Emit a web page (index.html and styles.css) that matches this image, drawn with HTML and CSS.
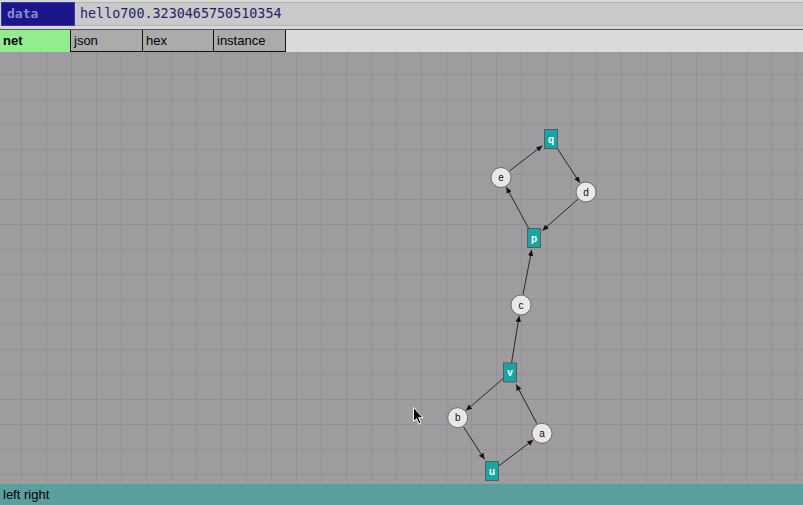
FILE: index.html
```html
<!DOCTYPE html>
<html>
<head>
<meta charset="utf-8">
<link rel="stylesheet" href="styles.css">
</head>
<body>
<div class="app">
  <div class="header">
    <div class="label">data</div>
    <div class="value">hello700.3230465750510354</div>
  </div>
  <div class="tabs">
    <div class="tab active">net</div>
    <div class="tab wide">json</div>
    <div class="tab">hex</div>
    <div class="tab wide">instance</div>
  </div>
  <div class="canvas">
    <svg class="graph" width="803" height="432" viewBox="0 0 803 432">
      <defs>
        <marker id="arr" markerUnits="userSpaceOnUse" markerWidth="7" markerHeight="6" refX="6" refY="3" orient="auto">
          <path d="M0,0.3 L6,3 L0,5.7 z" fill="#111"/>
        </marker>
      </defs>
      <g class="edges">
        <line x1="509.7" y1="118.8" x2="542.3" y2="93.7"/>
        <line x1="557.6" y1="97" x2="579.9" y2="130.8"/>
        <line x1="577.8" y1="147.3" x2="542.5" y2="178.5"/>
        <line x1="528.5" y1="176" x2="506.3" y2="135.2"/>
        <line x1="523.1" y1="242.2" x2="531.7" y2="198"/>
        <line x1="511.6" y1="310.7" x2="519.2" y2="263.9"/>
        <line x1="503" y1="326.7" x2="466" y2="358.5"/>
        <line x1="463.6" y1="375" x2="484.5" y2="407.3"/>
        <line x1="499" y1="413.7" x2="533.2" y2="387.9"/>
        <line x1="536.9" y1="371.6" x2="516.2" y2="332.5"/>
      </g>
      <g class="place">
        <circle cx="501" cy="125.5" r="10"/><text x="501" y="129">e</text>
        <circle cx="586" cy="140" r="10"/><text x="586" y="143.5">d</text>
        <circle cx="521" cy="253" r="10"/><text x="521" y="256.5">c</text>
        <circle cx="457.7" cy="365.7" r="10"/><text x="457.7" y="369.2">b</text>
        <circle cx="542" cy="381.3" r="10"/><text x="542" y="384.8">a</text>
      </g>
      <g class="trans">
        <rect x="544.5" y="77.5" width="13" height="19"/><text x="551" y="90.5">q</text>
        <rect x="527.5" y="176.5" width="13" height="19"/><text x="534" y="189.5">p</text>
        <rect x="503.5" y="311" width="13" height="19"/><text x="510" y="324">v</text>
        <rect x="485.5" y="409.5" width="13" height="19"/><text x="492" y="422.5">u</text>
      </g>
      <path class="cursor" d="M413.5,355.5 L413.5,369.5 L416.5,366.5 L419,372 L421,371 L418.7,365.7 L423,365.7 z"/>
    </svg>
  </div>
  <div class="status">left right</div>
</div>
</body>
</html>
```
FILE: styles.css
```css
html, body {
  margin: 0;
  padding: 0;
}
body {
  width: 803px;
  height: 505px;
  overflow: hidden;
  background: #d8d8d8;
  font-family: "Liberation Sans", Arial, sans-serif;
}
.app {
  display: flex;
  flex-direction: column;
  height: 505px;
}
.header {
  display: flex;
  height: 29px;
  box-sizing: border-box;
  padding: 2px 0 3px 0;
  background: #d8d8d8;
}
.label {
  width: 74px;
  box-sizing: border-box;
  margin-left: 1px;
  background: #1b1689;
  border: 1px solid #3b36b0;
  color: #8b8bd0;
  font-family: "DejaVu Sans Mono", monospace;
  font-weight: bold;
  font-size: 13px;
  line-height: 22px;
  padding-left: 5px;
}
.value {
  flex: 1;
  background: #c9c9c9;
  border-top: 1px solid #b4b4b4;
  border-bottom: 1px solid #b4b4b4;
  color: #22226a;
  font-family: "DejaVu Sans Mono", monospace;
  font-size: 13.4px;
  line-height: 22px;
  padding-left: 5px;
}
.tabs {
  display: flex;
  height: 23px;
  box-sizing: border-box;
  border-top: 1px solid #555;
  background: #dadada;
}
.tab {
  width: 71px;
  height: 22px;
  box-sizing: border-box;
  background: #ababab;
  border-right: 1px solid #111;
  border-bottom: 1px solid #111;
  font-size: 13px;
  line-height: 21px;
  padding-left: 3px;
  color: #000;
}
.tab.wide {
  width: 72px;
}
.tab.active {
  background: #90ee90;
  font-weight: bold;
  border-bottom: none;
}
.canvas {
  height: 432px;
  background-color: #9e9c9e;
  background-image:
    linear-gradient(to right, #939193 1.5px, transparent 1.5px),
    linear-gradient(to bottom, #939193 1.5px, transparent 1.5px);
  background-size: 25px 25px;
  background-position: 21px 22px;
  position: relative;
}
.graph {
  display: block;
}
.edges line {
  stroke: #1a1a1a;
  stroke-width: 0.9;
  marker-end: url(#arr);
}
.place circle {
  fill: #e8e8e8;
  stroke: #6e6e6e;
  stroke-width: 1;
}
.place text {
  font-family: "Liberation Sans", Arial, sans-serif;
  font-size: 10px;
  text-anchor: middle;
  fill: #111;
}
.trans rect {
  fill: #17a6a6;
  stroke: #5a5a5a;
  stroke-width: 1;
}
.trans text {
  font-family: "Liberation Sans", Arial, sans-serif;
  font-size: 10px;
  font-weight: bold;
  text-anchor: middle;
  fill: #fff;
}
.cursor {
  fill: #000;
  stroke: #fff;
  stroke-width: 1;
}
.status {
  height: 21px;
  background: #5b9e9e;
  color: #000;
  font-size: 13px;
  line-height: 21px;
  padding-left: 3px;
}
```
